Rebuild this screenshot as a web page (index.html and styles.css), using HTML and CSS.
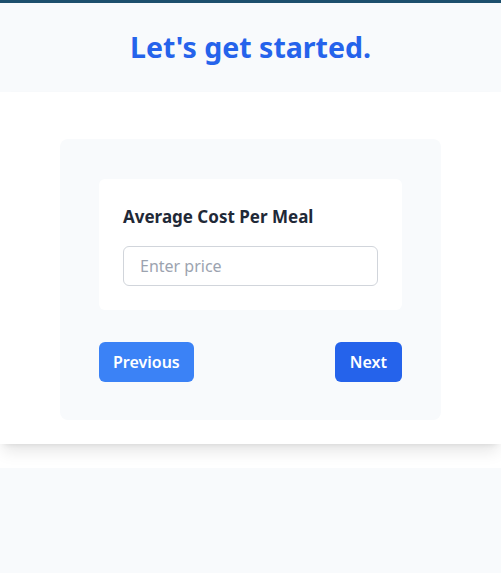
FILE: index.html
```html
<!DOCTYPE html>
<html lang="en">
<head>
    <meta charset="UTF-8">
    <meta name="viewport" content="width=device-width, initial-scale=1.0">
    <title>Let's get started</title>
    <link rel="stylesheet" href="styles.css">
</head>
<body>
    <!-- Page title -->
    <header class="top">
        <h1>Let's get started.</h1>
    </header>

    <!-- Step form -->
    <main class="main">
        <div class="step-card">
            <div class="question">
                <label for="mealCost">Average Cost Per Meal</label>
                <input type="text" id="mealCost" placeholder="Enter price">
            </div>

            <div class="nav-buttons">
                <button class="btn btn-prev">Previous</button>
                <button class="btn btn-next">Next</button>
            </div>
        </div>
    </main>

    <footer class="bottom"></footer>
</body>
</html>
```

FILE: styles.css
```css
html, body {
    height: 100%;
}

body {
    margin: 0;
    background-color: #ffffff;
    font-family: "Noto Sans", "Open Sans", sans-serif;
    display: flex;
    flex-direction: column;
}

.top {
    background-color: #f8fafc;
    border-top: 3px solid #1d4f6d;
    padding: 26px 0 27px;
    text-align: center;
}

.top h1 {
    margin: 0;
    font-size: 28.5px;
    line-height: 36px;
    font-weight: 700;
    color: #2563eb;
}

.main {
    background-color: #ffffff;
    padding: 47px 0 24px;
    box-shadow: 0 10px 15px -3px rgba(0, 0, 0, 0.1), 0 4px 6px -4px rgba(0, 0, 0, 0.1);
    position: relative;
    z-index: 1;
}

.step-card {
    width: 303px;
    margin: 0 auto;
    padding: 40px 39px 38px;
    background-color: #f8fafc;
    border-radius: 8px;
}

.question {
    background-color: #ffffff;
    border-radius: 6px;
    padding: 24px;
    display: flex;
    flex-direction: column;
}

.question label {
    font-size: 17px;
    line-height: 28px;
    font-weight: 700;
    color: #1f2937;
    margin-bottom: 15px;
}

.question input {
    box-sizing: border-box;
    width: 255px;
    height: 40px;
    padding: 0 16px;
    border: 1px solid #d1d5db;
    border-radius: 6px;
    font-family: inherit;
    font-size: 16px;
    color: #1f2937;
}

.question input::placeholder {
    color: #9ca3af;
}

.nav-buttons {
    display: flex;
    justify-content: space-between;
    margin-top: 32px;
}

.btn {
    border: none;
    border-radius: 6px;
    height: 40px;
    padding: 0 14px;
    font-family: inherit;
    font-size: 16px;
    font-weight: 600;
    color: #ffffff;
    cursor: pointer;
}

.btn-prev {
    background-color: #3b82f6;
}

.btn-next {
    background-color: #2563eb;
    padding: 0 15px;
}

.bottom {
    flex: 1;
    margin-top: 24px;
    background-color: #f8fafc;
}
```
